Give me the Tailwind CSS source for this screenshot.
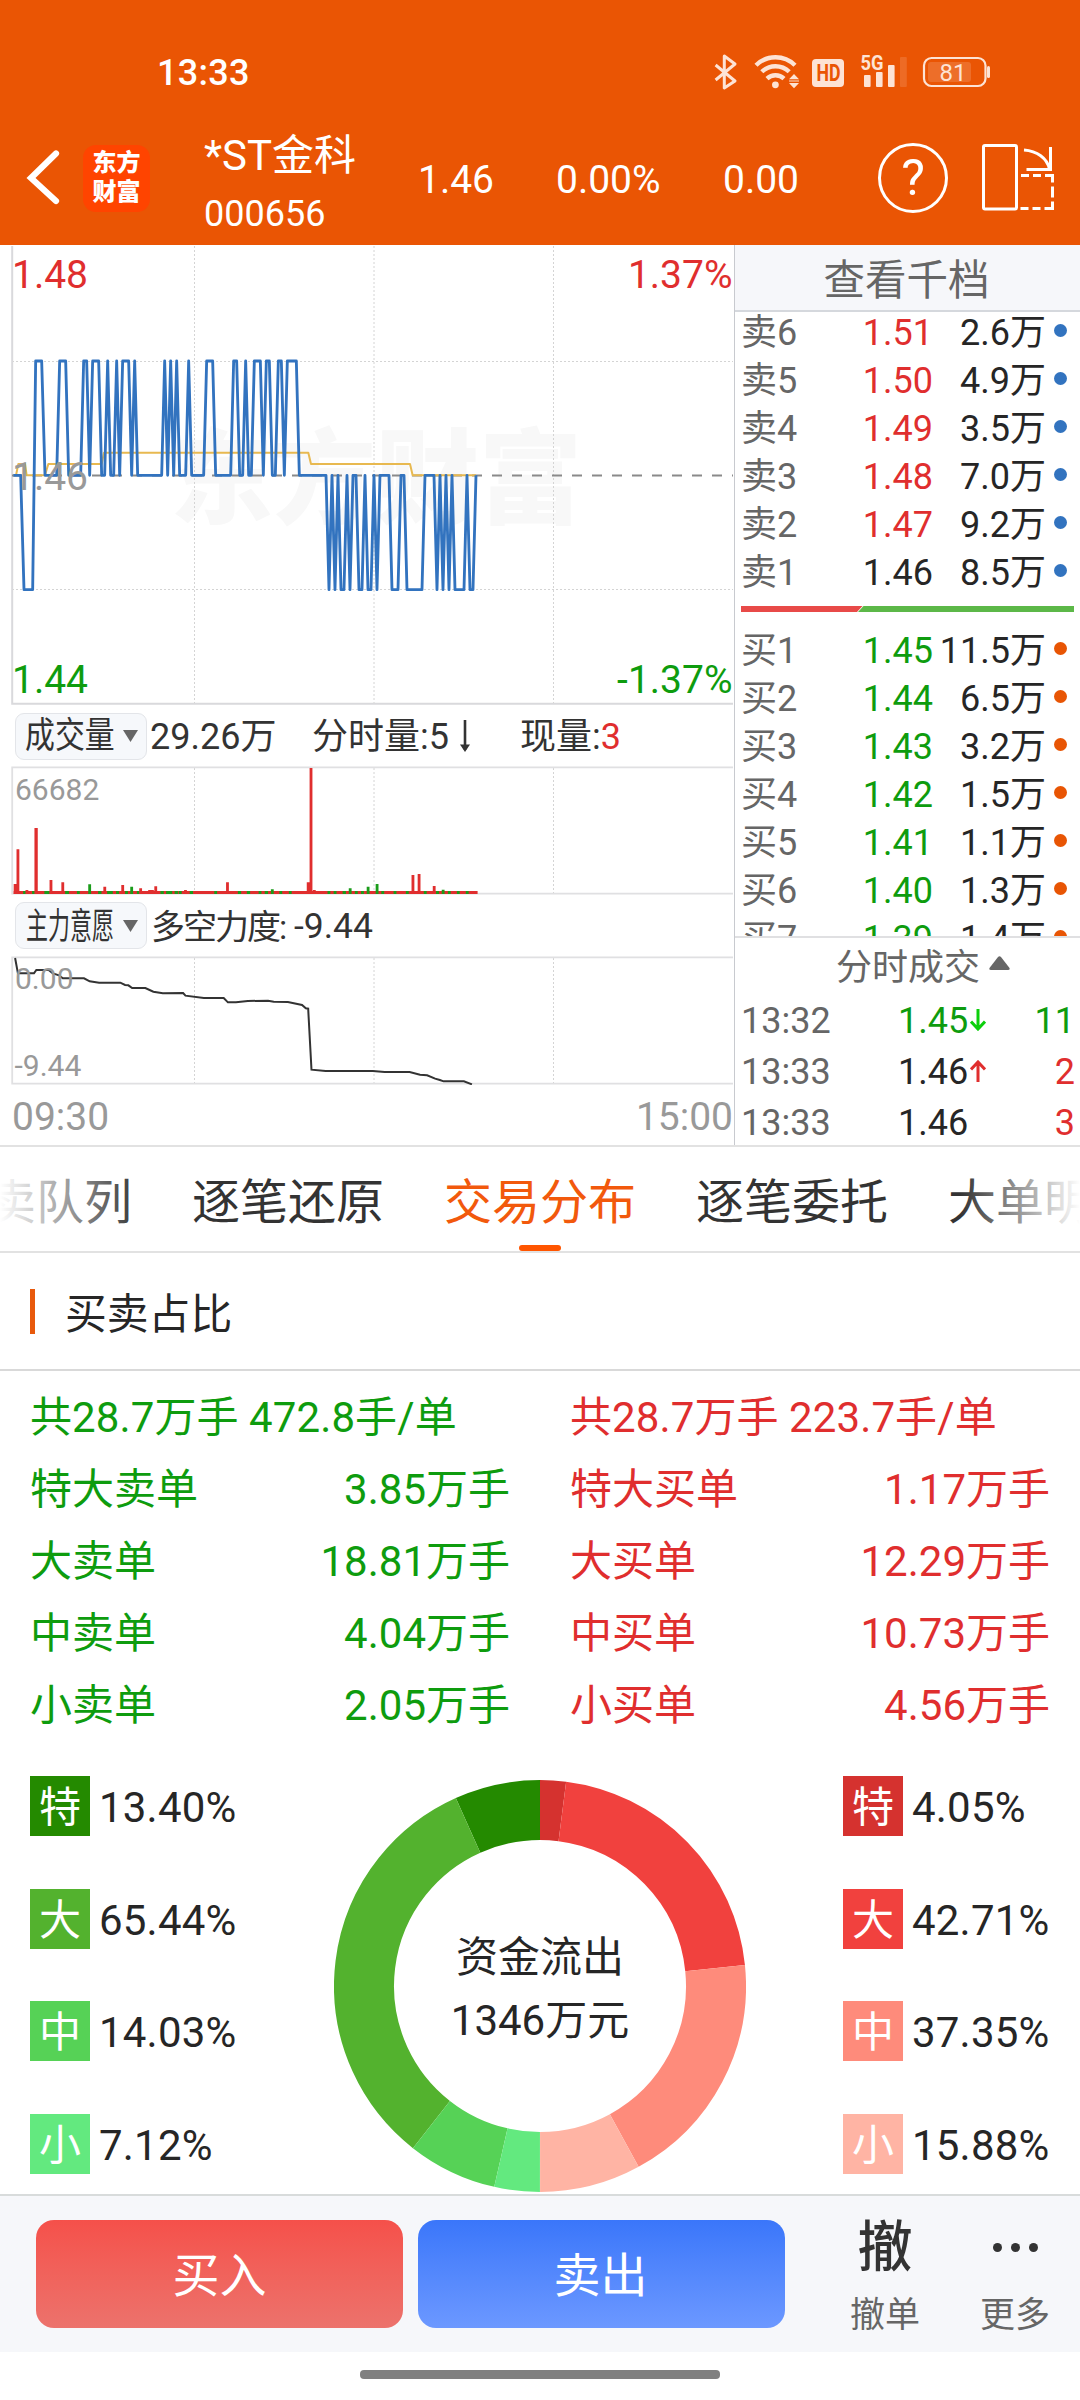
<!DOCTYPE html>
<html lang="zh-CN">
<head>
<meta charset="utf-8">
<title>*ST金科 000656</title>
<script src="https://cdn.jsdelivr.net/npm/@tailwindcss/browser@4"></script>
</head>
<body class="bg-white">
<div class="w-[1080px] h-[2400px] overflow-hidden flex flex-col bg-white text-[#262626] font-[Roboto,'Noto_Sans_CJK_SC',sans-serif]">

  <!-- Header -->
  <header class="h-[245px] shrink-0 bg-[#ea5504] text-white flex flex-col">
    <div class="h-[111px] shrink-0 flex pt-[50px] pl-[157px]">
      <div class="w-[551px] text-[36px] leading-[46px] font-medium tracking-[0.3px]">13:33</div>
      <svg class="w-[296px] h-[45px]" viewBox="708 50 296 45" fill="#fde3d5">
        <path d="M715.6 65 735 81 724.3 88V56L735 64 715.6 80" fill="none" stroke="#fde3d5" stroke-width="3" stroke-linejoin="round"/>
        <g fill="none" stroke="#fde3d5" stroke-width="4.400">
          <path d="M756 65.2a27.8 27.8 0 0 1 39 0"/>
          <path d="M761.8 71.8a19.5 19.5 0 0 1 27.4 0"/>
          <path d="M767 78.6a12.5 12.5 0 0 1 17 0"/>
        </g>
        <circle cx="775.4" cy="84.8" r="3.4"/>
        <path d="M789 79.2 794 74l5 5.200zM789 83l5 5.200 5-5.200z"/><path d="M789 80.300h10v1.400h-10z" opacity=".7"/>
        <rect x="812" y="59" width="32" height="28" rx="4"/>
        <text x="816.500" y="81.300" font-size="23.500" font-weight="700" fill="#ea5504" textLength="24" lengthAdjust="spacingAndGlyphs">HD</text>
        <text x="860.500" y="69.700" font-size="20" font-weight="700" textLength="23" lengthAdjust="spacingAndGlyphs">5G</text>
        <rect x="864" y="75" width="6.600" height="12" rx="1"/><rect x="876" y="72" width="6.600" height="15" rx="1"/>
        <rect x="888" y="65" width="6.600" height="22" rx="1"/><rect x="900" y="57" width="6.800" height="30" rx="1" opacity=".16"/>
        <rect x="924" y="58" width="61.500" height="28" rx="7.500" fill="none" stroke="#fde3d5" stroke-width="2.200"/>
        <rect x="928" y="62" width="43" height="20" rx="3" opacity=".18"/>
        <rect x="987" y="66" width="3" height="12" rx="1.500"/>
        <text x="939.500" y="81" font-size="24" textLength="27">81</text>
      </svg>
    </div>
    <div class="h-[134px] flex items-center pl-[26px]">
      <svg class="w-[34px] h-[60px]" viewBox="0 0 34 60"><path d="M30 5.500 5 30l25 23" fill="none" stroke="#fff" stroke-width="6.200" stroke-linecap="round" stroke-linejoin="miter"/></svg>
      <div class="ml-[23px] w-[67px] h-[67px] rounded-[13px] bg-[#ff4400] flex flex-col items-center justify-center text-[24px] leading-[29px] font-black">
        <span>东方</span><span>财富</span>
      </div>
      <div class="ml-[54px] w-[214px] mt-[13px] leading-[58px]">
        <div class="text-[42px]">*ST金科</div>
        <div class="text-[36px]">000656</div>
      </div>
      <div class="flex text-[39px] leading-[46px] pt-[4px]">
        <span class="w-[138px]">1.46</span><span class="w-[167px]">0.00%</span><span class="w-[155px]">0.00</span>
      </div>
      <div class="w-[70px] h-[70px] rounded-full border-[3px] border-white flex items-center justify-center text-[50px] leading-[64px]">?</div>
      <svg class="ml-[33px] w-[74px] h-[70px]" viewBox="981 143 74 70" fill="none" stroke="#fff" stroke-width="3">
        <rect x="983.500" y="145.500" width="33" height="63.500" rx="1.500"/>
        <path d="M1024 150c13 1 23 8 25.500 19M1050.500 147v22.500h-24"/>
        <path d="M1021 175.500h8m4 0h8m4 0h7.500v7m0 4v11m0 4v7h-8m-4 0h-8m-4 0h-8"/>
      </svg>
    </div>
  </header>

  <!-- Quote area -->
  <section class="h-[902px] shrink-0 flex border-b-2 border-[#e2e2e2]">
    <div class="w-[734px] shrink-0 flex flex-col">
      <svg class="w-[734px] h-[460px] shrink-0" viewBox="0 245 734 460">
        <text x="170" y="516" font-size="103" font-weight="900" fill="#f8f8f8">东方财富</text>
        <g stroke="#d4d4d4" stroke-width="1" stroke-dasharray="2 2">
          <path d="M194.500 246V703M374 246V703M553.500 246V703M12 361.500H733M12 589.500H733"/>
        </g>
        <path d="M12.200 246V703.700H733" fill="none" stroke="#d9d9dc" stroke-width="2"/>
        <path d="M12 475.500H733" stroke="#8a8a8a" stroke-width="2" stroke-dasharray="10 10"/>
        <g transform="translate(0 240) scale(.33333)" fill="none" stroke-linejoin="round">
          <polyline stroke="#e8b950" stroke-width="6" points="40,706 48,706 55,672 75,672 80,706 135,706 145,672 305,672 312,638 925,638 933,672 1230,672 1238,706 1428,706"/>
          <polyline stroke="#3273bf" stroke-width="8.500" points="40,706 62,706 72,1049 98,1049 107,363 125,363 135,706 170,706 179,363 197,363 206,706 242,706 251,363 260,363 269,706 278,363 296,363 305,706 314,706 323,363 332,706 341,706 350,363 359,706 368,363 386,363 395,706 404,363 413,706 485,706 494,363 503,706 512,363 521,706 530,363 539,706 557,706 566,363 575,706 611,706 620,363 638,363 647,706 692,706 701,363 710,363 719,706 728,706 737,363 746,706 754,706 763,363 781,363 790,706 799,363 808,363 817,706 826,706 835,363 844,363 853,706 862,363 889,363 898,706 978,706 987,1049 996,706 1005,1049 1014,706 1023,1049 1032,1049 1041,706 1050,1049 1059,706 1068,706 1077,1049 1086,1049 1095,706 1104,1049 1113,1049 1122,706 1131,1049 1140,706 1167,706 1176,1049 1194,1049 1203,706 1212,706 1221,1049 1266,1049 1275,706 1302,706 1311,1049 1320,706 1329,1049 1338,706 1347,1049 1356,706 1365,1049 1392,1049 1401,706 1410,1049 1419,1049 1428,706"/>
        </g>
        <g font-size="39">
          <text x="12" y="288" fill="#e02e2e">1.48</text><text x="732.500" y="288" fill="#e02e2e" text-anchor="end">1.37%</text>
          <text x="12" y="490" fill="#999">1.46</text>
          <text x="12" y="693" fill="#0e9c0e">1.44</text><text x="732.500" y="693" fill="#0e9c0e" text-anchor="end">-1.37%</text>
        </g>
      </svg>

      <div class="h-[61px] shrink-0 flex items-center pl-[15px] pt-[1px] text-[36px] leading-[46px] text-[#333]">
        <div class="w-[132px] h-[47px] rounded-[9px] border border-[#e3e5e9] bg-[#f6f8fb] flex items-center pl-[9px]">
          <div class="w-[98px] shrink-0 whitespace-nowrap origin-left scale-x-[0.83]">成交量</div>
          <svg class="w-[15px] h-[12px] shrink-0" viewBox="0 0 15 12"><path d="M0 0h15l-7.500 12z" fill="#666"/></svg>
        </div>
        <div class="ml-[3px] pt-[2px] w-[162px]">29.26万</div>
        <div class="w-[148px] pt-[2px]">分时量:5</div>
        <svg class="w-[10px] h-[32px]" viewBox="0 0 10 32"><path d="M5 0v30" stroke="#333" stroke-width="2.600"/><path d="M0 24.500h10l-5 7.500z" fill="#333"/></svg>
        <div class="ml-[50px] pt-[2px]">现量:<span class="text-[#e02e2e]">3</span></div>
      </div>

      <!-- Volume -->
      <svg class="w-[734px] h-[129px] shrink-0" viewBox="0 766 734 129">
        <path d="M194.500 768V893M374 768V893M553.500 768V893" stroke="#d4d4d4" stroke-dasharray="2 2"/>
        <path d="M733 767.300H12.200V893.700H733" fill="none" stroke="#e0e0e2" stroke-width="1.800"/>
        <text x="15" y="800" font-size="30" fill="#999">66682</text>
        <g transform="translate(0 690) scale(.47194 .33333)">
          <path d="M29 603H1012V612H29z" fill="#e02e2e"/>
          <path fill="#1a9c1a" d="M49 603h6v9h-6zM68 603h6v9h-6zM94 603h6v9h-6zM100 603h5v9h-5zM138 603h8v9h-8zM163 603h6v9h-6zM187 583h6v29h-6zM208 603h7v9h-7zM227 603h12v9h-12zM246 603h6v9h-6zM265 603h6v9h-6zM276 590h6v22h-6zM290 603h6v9h-6zM340 603h7v9h-7zM352 603h13v9h-13zM370 603h7v9h-7zM379 603h6v9h-6zM402 603h7v9h-7zM454 603h6v9h-6zM504 603h7v9h-7zM523 603h7v9h-7zM548 603h6v9h-6zM561 603h7v9h-7zM574 598h6v14h-6zM592 603h6v9h-6zM612 603h6v9h-6zM694 603h6v9h-6zM707 603h6v9h-6zM726 603h7v9h-7zM739 595h6v17h-6zM752 603h6v9h-6zM765 603h6v9h-6zM777 590h6v22h-6zM796 582h6v30h-6zM808 603h6v9h-6zM834 603h6v9h-6zM860 603h6v9h-6zM898 603h6v9h-6zM924 603h6v9h-6zM936 599h6v13h-6zM949 603h6v9h-6zM968 603h6v9h-6zM987 603h6v9h-6z"/>
          <path fill="#e02e2e" d="M29 582h6v30h-6zM35 478h6v134h-6zM54 600h6v12h-6zM73 414h7v198h-7zM105 570h6v42h-6zM130 577h6v35h-6zM219 590h6v22h-6zM257 585h6v27h-6zM295 595h6v17h-6zM314 600h12v12h-12zM327 589h6v23h-6zM390 600h6v12h-6zM479 577h6v35h-6zM650 577h6v35h-6zM656 234h6v378h-6zM663 600h6v12h-6zM872 555h6v57h-6zM885 552h6v60h-6zM917 588h6v24h-6z"/>
        </g>
      </svg>

      <div class="h-[61px] shrink-0 flex items-center pl-[15px] leading-[46px] text-[#333]">
        <div class="w-[132px] h-[47px] rounded-[9px] border border-[#e3e5e9] bg-[#f6f8fb] flex items-center pl-[10px] text-[36px]">
          <div class="w-[97px] shrink-0 whitespace-nowrap origin-left scale-x-[0.61] pt-[2px]">主力意愿</div>
          <svg class="w-[15px] h-[12px] shrink-0" viewBox="0 0 15 12"><path d="M0 0h15l-7.500 12z" fill="#666"/></svg>
        </div>
        <div class="ml-[4px] w-[143px] pt-[2px] text-[34px] tracking-[-2px] whitespace-nowrap">多空力度:</div>
        <div class="text-[35.5px] pt-[1px]">-9.44</div>
      </div>

      <!-- Main-force intention -->
      <svg class="w-[734px] h-[129px] shrink-0" viewBox="0 956 734 129">
        <path d="M194.500 958V1083M374 958V1083M553.500 958V1083" stroke="#d4d4d4" stroke-dasharray="2 2"/>
        <path d="M733 957.300H12.200V1083.700H733" fill="none" stroke="#e0e0e2" stroke-width="1.800"/>
        <g transform="translate(0 690) scale(.47194 .33333)">
          <polyline fill="none" stroke="#333" stroke-width="2" vector-effect="non-scaling-stroke" points="32,804 38,850 72,850 77,840 103,840 112,850 125,856 133,865 178,865 190,874 210,878 255,878 265,885 272,886 280,894 308,894 325,905 345,910 388,909 393,917 432,924 474,924 483,937 500,937 525,933 568,932 580,935 610,936 640,945 648,955 653,956 660,1139 690,1143 790,1143 815,1146 868,1146 890,1154 905,1156 922,1166 932,1170 940,1174 983,1174 1000,1183"/>
        </g>
        <g font-size="30" fill="#999"><text x="15" y="989">0.00</text><text x="14.500" y="1076">-9.44</text></g>
      </svg>
      <div class="h-[60px] flex justify-between pl-[12px] pr-[1px] text-[39px] leading-[64px] text-[#999]"><span>09:30</span><span>15:00</span></div>
    </div>

    <!-- Order book -->
    <div class="w-[346px] border-l border-[#c8cacf] flex flex-col">
      <div class="h-[67px] shrink-0 bg-[#f6f7fa] border-b-2 border-[#d5d8dd] text-center text-[41.5px] leading-[72px] text-[#666] pr-[2px]">查看千档</div>
      <div class="h-[624px] shrink-0 overflow-hidden">
        <div id="asks" class="-mt-[3px]"></div>
        <svg class="block ml-[6px] mt-[9px] mb-[15px] w-[333px] h-[6px]" viewBox="0 0 333 6"><path d="M0 0H121.500L116 6H0z" fill="#e84a48"/><path d="M122.500 0H333V6H117z" fill="#5cb848"/></svg>
        <div id="bids"></div>
      </div>
      <div class="h-[61px] shrink-0 border-t-2 border-[#e0e0e2] flex items-center pl-[101px] text-[36px] leading-[60px] text-[#666]">
        <span class="pt-[1px]">分时成交</span><svg class="ml-[9px] mb-[10px] w-[21px] h-[14px]" viewBox="0 0 21 14"><path d="M9 1q1.500-1.600 3 0l8.500 11q.8 2-1.500 2H2q-2.300 0-1.500-2z" fill="#666"/></svg>
      </div>
      <div id="ticks" class="-mt-[1px]"></div>
    </div>
  </section>

  <!-- Tabs -->
  <nav class="relative h-[106px] shrink-0 border-b-2 border-[#e2e2e2] overflow-hidden">
    <div class="flex gap-[60px] -ml-[60px] w-[1300px] text-[48px] leading-[112px] text-[#333] whitespace-nowrap">
      <span>买卖队列</span><span>逐笔还原</span>
      <span class="text-[#f2590c]">交易分布</span><span>逐笔委托</span><span>大单明细</span>
    </div>
    <div class="absolute inset-y-0 left-0 w-[140px] bg-linear-to-r from-white to-white/0"></div>
    <div class="absolute inset-y-0 right-0 w-[120px] bg-linear-to-l from-white to-white/0"></div>
    <div class="absolute bottom-0 left-[519px] w-[42px] h-[6px] rounded-[3px] bg-[#ff5500]"></div>
  </nav>

  <div class="h-[118px] shrink-0 border-b-2 border-[#d9d9d9] flex items-center pl-[30px]">
    <div class="w-[5px] h-[45px] bg-[#e8590c]"></div>
    <div class="ml-[30px] mt-[7px] text-[41.8px] leading-[60px]">买卖占比</div>
  </div>

  <div class="h-[384px] shrink-0 flex gap-[60px] px-[30px] pt-[11px] text-[42px] leading-[72px]">
    <div id="sell" class="w-[480px] text-[#0e9c0e]"></div>
    <div id="buy" class="w-[480px] text-[#e02e2e]"></div>
  </div>

  <div class="h-[439px] shrink-0 flex px-[30px]">
    <div id="legendSell" class="w-[304px] pt-[21px] flex flex-col gap-[52.700px]"></div>
    <div class="relative w-[412px] h-[412px] mt-[25px]">
      <svg class="w-[412px] h-[412px]" viewBox="0 0 412 412" fill="none" stroke-width="60">
        <g id="ring"></g>
      </svg>
      <div class="absolute inset-0 flex flex-col items-center justify-center text-[42px] leading-[63px] pt-[5px]"><span>资金流出</span><span>1346万元</span></div>
    </div>
    <div id="legendBuy" class="ml-[97px] pt-[21px] flex flex-col gap-[52.700px]"></div>
  </div>

  <!-- Trade bar -->
  <footer class="h-[158px] shrink-0 bg-[#f6f7fa] border-t-2 border-[#d8dbdb] flex pl-[36px] pt-[24px]">
    <div class="w-[367px] h-[108px] rounded-[18px] bg-linear-to-b from-[#f5504a] to-[#ec726c] text-white text-[47px] leading-[112px] text-center">买入</div>
    <div class="ml-[15px] w-[367px] h-[108px] rounded-[18px] bg-linear-to-b from-[#3a76fa] to-[#6c98ff] text-white text-[47px] leading-[112px] text-center pr-[2px]">卖出</div>
    <div class="ml-[35px] w-[130px] flex flex-col items-center">
      <div class="text-[55px] leading-[54px] font-medium text-[#333]">撤</div>
      <div class="mt-[20px] text-[35px] leading-[44px] text-[#666]">撤单</div>
    </div>
    <div class="w-[130px] flex flex-col items-center">
      <div class="h-[54px] flex gap-[9px] items-center"><i class="w-[9px] h-[9px] rounded-full bg-[#333]"></i><i class="w-[9px] h-[9px] rounded-full bg-[#333]"></i><i class="w-[9px] h-[9px] rounded-full bg-[#333]"></i></div>
      <div class="mt-[20px] text-[35px] leading-[44px] text-[#666]">更多</div>
    </div>
  </footer>
  <div class="h-[48px] flex justify-center pt-[18px]"><div class="w-[360px] h-[9px] rounded-[4px] bg-[#808080]"></div></div>
</div>

<script>
  const put = (id, html) => { document.getElementById(id).innerHTML = html; };
  const RED = 'text-[#e02e2e]', GREEN = 'text-[#0e9c0e]', INK = 'text-[#262626]';

  const level = (name, price, vol, color, dot) => `
    <div class="h-[48px] flex items-center text-[36px] leading-[48px] pl-[6px]">
      <span class="w-[80px] text-[#666]">${name}</span>
      <span class="w-[112px] text-right ${color}">${price}</span>
      <span class="w-[113px] text-right whitespace-nowrap">${vol}</span>
      <span class="ml-[8px] mb-[6px] w-[13px] h-[13px] rounded-full ${dot}"></span>
    </div>`;
  put('asks', [['6','1.51','2.6'],['5','1.50','4.9'],['4','1.49','3.5'],['3','1.48','7.0'],['2','1.47','9.2'],['1','1.46','8.5']]
    .map(([n, p, v]) => level('卖' + n, p, v + '万', n === '1' ? INK : RED, 'bg-[#3273bf]')).join(''));
  put('bids', [['1','1.45','11.5'],['2','1.44','6.5'],['3','1.43','3.2'],['4','1.42','1.5'],['5','1.41','1.1'],['6','1.40','1.3'],['7','1.39','1.4']]
    .map(([n, p, v]) => level('买' + n, p, v + '万', GREEN, 'bg-[#e85504]')).join(''));

  const arrow = {
    down: '<svg class="w-[16px] h-[22px] ml-[2px] mb-[3px]" viewBox="0 0 16 22" fill="none" stroke="#0ccf0c" stroke-width="3"><path d="M8 0v20M1 12.500 8 20l7-7.500"/></svg>',
    up: '<svg class="w-[16px] h-[22px] ml-[2px] mb-[3px]" viewBox="0 0 16 22" fill="none" stroke="#e02e2e" stroke-width="3"><path d="M8 22V2M1 9.500 8 2l7 7.500"/></svg>',
    none: ''
  };
  put('ticks', [['13:32','1.45','down','11',GREEN,GREEN],['13:33','1.46','up','2',INK,RED],['13:33','1.46','none','3',INK,RED]]
    .map(([t, p, a, q, pc, qc]) => `
    <div class="h-[51px] flex items-center text-[36px] leading-[51px] pl-[6px] pr-[5px]">
      <span class="w-[157px] text-[#666]">${t}</span><span class="${pc}">${p}</span>${arrow[a]}
      <span class="ml-auto ${qc}">${q}</span>
    </div>`).join(''));

  const table = (head, rows) => `<div class="whitespace-nowrap tracking-[0.1px]">${head}</div>` +
    rows.map(([a, b]) => `<div class="flex justify-between"><span>${a}</span><span>${b}万手</span></div>`).join('');
  put('sell', table('共28.7万手 472.8手/单', [['特大卖单','3.85'],['大卖单','18.81'],['中卖单','4.04'],['小卖单','2.05']]));
  put('buy', table('共28.7万手 223.7手/单', [['特大买单','1.17'],['大买单','12.29'],['中买单','10.73'],['小买单','4.56']]));

  const sell = [['特',13.40,'#248a00'],['大',65.44,'#53b22e'],['中',14.03,'#56d256'],['小',7.12,'#63e97f']];
  const buy = [['特',4.05,'#d5322f'],['大',42.71,'#f1413e'],['中',37.35,'#fe8b7b'],['小',15.88,'#ffb4a4']];
  const legend = rows => rows.map(([n, v, c]) => `
    <div class="h-[60px] flex text-[42px]">
      <span class="w-[60px] h-[60px] text-center text-white leading-[64px]" style="background:${c}">${n}</span>
      <span class="ml-[9px] leading-[63px] tracking-[0.2px]">${v.toFixed(2)}%</span>
    </div>`).join('');
  put('legendSell', legend(sell));
  put('legendBuy', legend(buy));

  const point = (r, v) => {
    const a = v / 100 * Math.PI;
    return (206 + r * Math.sin(a)).toFixed(2) + ' ' + (206 - r * Math.cos(a)).toFixed(2);
  };
  const arcs = (rows, dir) => {
    let at = 0;
    return rows.map(([, v, c]) => {
      const from = at; at = Math.min(100, at + v);
      return `<path d="M${point(176, dir * from)}A176 176 0 0 ${dir > 0 ? 1 : 0} ${point(176, dir * at)}" stroke="${c}"/>`;
    }).join('');
  };
  put('ring', arcs(sell, -1) + arcs(buy, 1));
</script>
</body>
</html>
